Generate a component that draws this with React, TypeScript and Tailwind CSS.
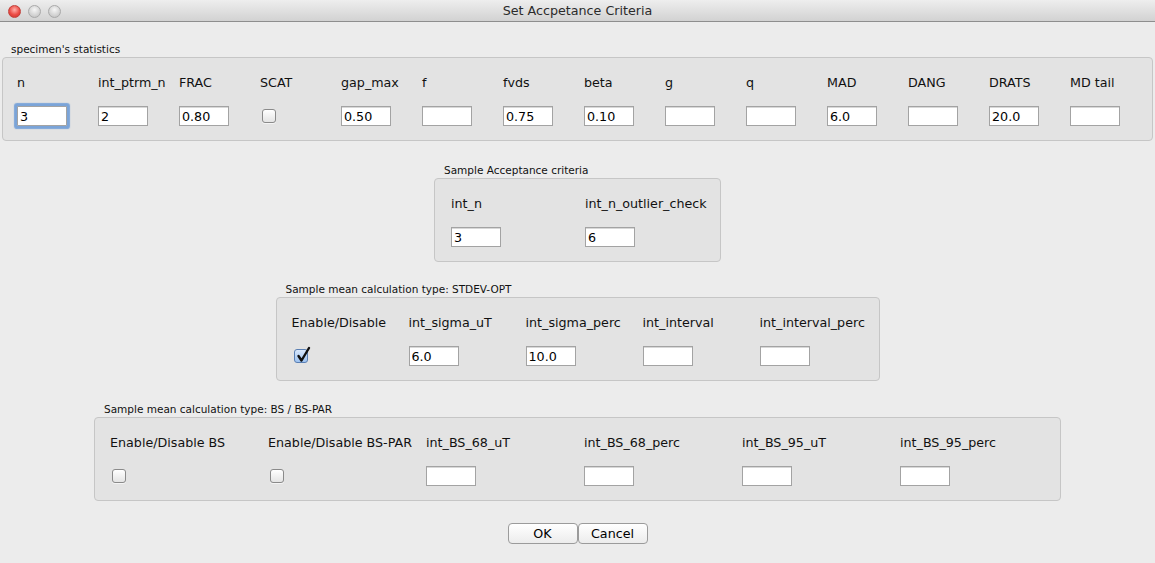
import type { ReactNode } from 'react'

const font = { fontFamily: '"DejaVu Sans", "Liberation Sans", sans-serif' }

function TextBox({ value, focused }: { value?: string; focused?: boolean }) {
  return (
    <input
      readOnly
      value={value ?? ''}
      className={
        'h-[20px] w-[50px] border border-[#a3a3a3] bg-white px-[2px] text-[12.7px] leading-[18px] text-black outline-none ' +
        (focused
          ? 'rounded-[1px] shadow-[0_0_1px_3px_rgba(104,153,214,0.85)]'
          : 'shadow-[inset_0_1px_0_#d8d8d8]')
      }
      style={font}
    />
  )
}

function CheckBox({ checked }: { checked?: boolean }) {
  if (checked) {
    return (
      <div className="relative ml-[2px] h-[14px] w-[14px] rounded-[3px] border border-[#5a7fb3] bg-[linear-gradient(#d9e8fb,#9dc2f0)]">
        <svg
          className="absolute -top-[5px] left-[1px]"
          width="15"
          height="18"
          viewBox="0 0 15 18"
        >
          <path
            d="M2.5 11 L5.5 15.5 L13 3"
            fill="none"
            stroke="#111"
            strokeWidth="2.4"
            strokeLinecap="round"
            strokeLinejoin="round"
          />
        </svg>
      </div>
    )
  }
  return (
    <div className="ml-[2px] h-[14px] w-[14px] rounded-[3px] border border-[#8a8a8a] bg-[linear-gradient(#ffffff,#e4e4e4)] shadow-[0_1px_0_rgba(255,255,255,0.6)]" />
  )
}

function Cell({ label, children }: { label: string; children: ReactNode }) {
  return (
    <div className="flex flex-col items-start">
      <div className="h-[18px] whitespace-nowrap text-[12.7px] leading-[18px] text-[#111]">
        {label}
      </div>
      <div className="mt-[14px] flex h-[20px] items-center">{children}</div>
    </div>
  )
}

function Group({
  title,
  boxClass,
  titleClass,
  children,
}: {
  title: string
  boxClass: string
  titleClass: string
  children: ReactNode
}) {
  return (
    <div className="flex flex-col items-start">
      <div
        className={
          'h-[14px] whitespace-nowrap text-[10.5px] leading-[14px] text-[#111] ' +
          titleClass
        }
      >
        {title}
      </div>
      <div
        className={
          'mt-[1px] h-[84px] rounded-[4px] border border-[#c6c6c6] bg-[#e3e3e3] pt-[16px] ' +
          boxClass
        }
      >
        {children}
      </div>
    </div>
  )
}

const specimen: { label: string; value?: string; check?: boolean }[] = [
  { label: 'n', value: '3' },
  { label: 'int_ptrm_n', value: '2' },
  { label: 'FRAC', value: '0.80' },
  { label: 'SCAT', check: true },
  { label: 'gap_max', value: '0.50' },
  { label: 'f' },
  { label: 'fvds', value: '0.75' },
  { label: 'beta', value: '0.10' },
  { label: 'g' },
  { label: 'q' },
  { label: 'MAD', value: '6.0' },
  { label: 'DANG' },
  { label: 'DRATS', value: '20.0' },
  { label: 'MD tail' },
]

export default function App() {
  return (
    <div className="h-[563px] w-[1155px] overflow-hidden bg-[#ececec]" style={font}>
      {/* title bar */}
      <div className="relative flex h-[22px] items-center justify-center border-b border-[#8e8e8e] bg-[linear-gradient(#eeeeee,#d2d2d2)]">
        <div className="absolute left-[8px] top-[5px] flex gap-[7px]">
          <span className="h-[13px] w-[13px] rounded-full border border-[#c2413b] bg-[radial-gradient(circle_at_50%_35%,#ffb0aa,#ec4c45_55%,#c7332d)]" />
          <span className="h-[13px] w-[13px] rounded-full border border-[#a9a9a9] bg-[radial-gradient(circle_at_50%_35%,#f6f6f6,#d3d3d3_60%,#bdbdbd)]" />
          <span className="h-[13px] w-[13px] rounded-full border border-[#a9a9a9] bg-[radial-gradient(circle_at_50%_35%,#f6f6f6,#d3d3d3_60%,#bdbdbd)]" />
        </div>
        <span className="text-[12.7px] text-[#2b2b2b]">Set Accpetance Criteria</span>
      </div>

      <div className="flex flex-col items-center">
        {/* specimen's statistics */}
        <div className="mt-[20px] self-stretch px-[2px]">
          <Group
            title="specimen's statistics"
            titleClass="pl-[9px]"
            boxClass="w-[1151px] pl-[14px]"
          >
            <div className="grid auto-cols-[81px] grid-flow-col">
              {specimen.map((s) => (
                <Cell key={s.label} label={s.label}>
                  {s.check ? <CheckBox /> : <TextBox value={s.value} focused={s.label === 'n'} />}
                </Cell>
              ))}
            </div>
          </Group>
        </div>

        {/* sample acceptance */}
        <div className="mt-[22px]">
          <Group
            title="Sample Acceptance criteria"
            titleClass="pl-[10px]"
            boxClass="w-[287px] pl-[16px]"
          >
            <div className="grid auto-cols-[134px] grid-flow-col">
              <Cell label="int_n">
                <TextBox value="3" />
              </Cell>
              <Cell label="int_n_outlier_check">
                <TextBox value="6" />
              </Cell>
            </div>
          </Group>
        </div>

        {/* STDEV-OPT */}
        <div className="mt-[20px]">
          <Group
            title="Sample mean calculation type: STDEV-OPT"
            titleClass="pl-[10px]"
            boxClass="w-[604px] pl-[15px]"
          >
            <div className="grid auto-cols-[117px] grid-flow-col">
              <Cell label="Enable/Disable">
                <CheckBox checked />
              </Cell>
              <Cell label="int_sigma_uT">
                <TextBox value="6.0" />
              </Cell>
              <Cell label="int_sigma_perc">
                <TextBox value="10.0" />
              </Cell>
              <Cell label="int_interval">
                <TextBox />
              </Cell>
              <Cell label="int_interval_perc">
                <TextBox />
              </Cell>
            </div>
          </Group>
        </div>

        {/* BS / BS-PAR */}
        <div className="mt-[21px]">
          <Group
            title="Sample mean calculation type: BS / BS-PAR"
            titleClass="pl-[10px]"
            boxClass="w-[967px] pl-[15px]"
          >
            <div className="grid auto-cols-[158px] grid-flow-col">
              <Cell label="Enable/Disable BS">
                <CheckBox />
              </Cell>
              <Cell label="Enable/Disable BS-PAR">
                <CheckBox />
              </Cell>
              <Cell label="int_BS_68_uT">
                <TextBox />
              </Cell>
              <Cell label="int_BS_68_perc">
                <TextBox />
              </Cell>
              <Cell label="int_BS_95_uT">
                <TextBox />
              </Cell>
              <Cell label="int_BS_95_perc">
                <TextBox />
              </Cell>
            </div>
          </Group>
        </div>

        {/* buttons */}
        <div className="mt-[22px] flex">
          <button className="h-[21px] w-[70px] rounded-[4px] border border-[#9b9b9b] bg-[linear-gradient(#ffffff,#ececec)] text-[12.7px] leading-[19px] text-black">
            OK
          </button>
          <button className="h-[21px] w-[70px] rounded-[4px] border border-[#9b9b9b] bg-[linear-gradient(#ffffff,#ececec)] text-[12.7px] leading-[19px] text-black">
            Cancel
          </button>
        </div>
      </div>
    </div>
  )
}
